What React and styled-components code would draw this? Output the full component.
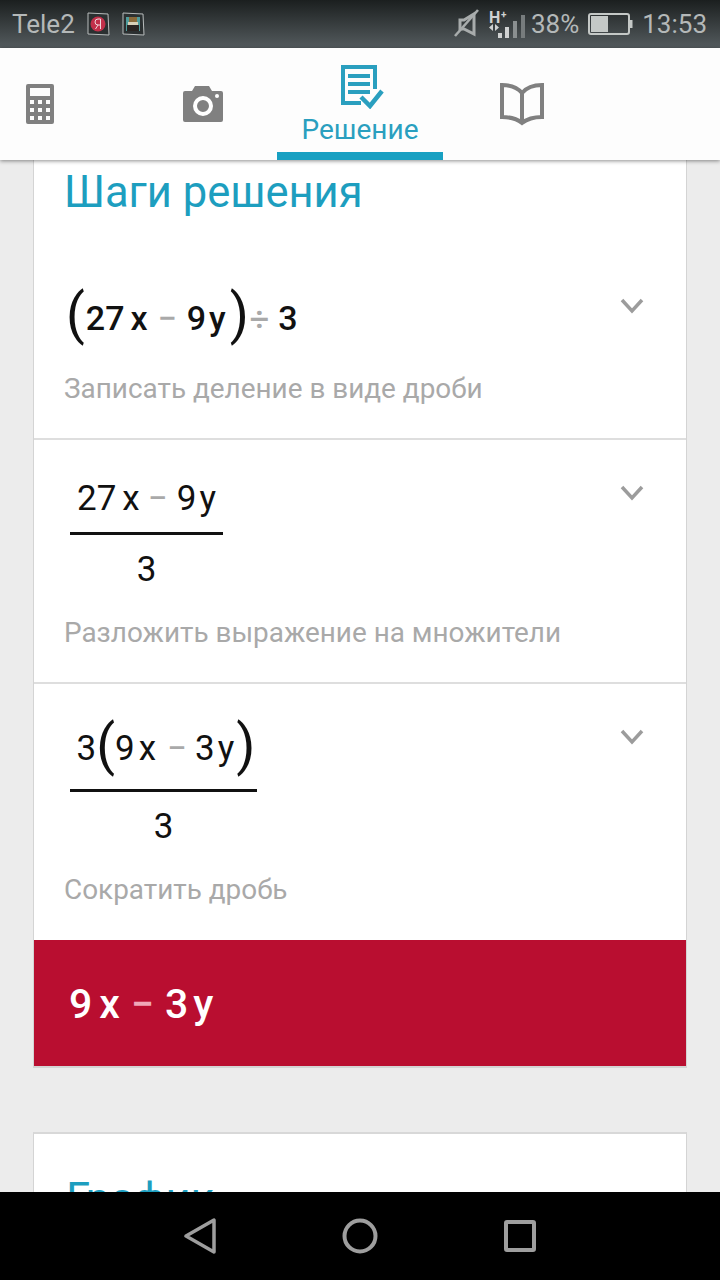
import React from "react"
import styled, { createGlobalStyle } from "styled-components"

const GlobalStyle = createGlobalStyle`
  html, body {
    margin: 0;
    padding: 0;
    background: #ececec;
    font-family: Roboto, "Liberation Sans", sans-serif;
  }
`

const Screen = styled.div`
  width: 720px;
  height: 1280px;
  display: flex;
  flex-direction: column;
  overflow: hidden;
  background: #ececec;
`

const StatusBar = styled.div`
  height: 48px;
  flex: none;
  display: flex;
  align-items: center;
  justify-content: space-between;
  padding: 0 13px 0 12px;
  background: linear-gradient(#1b1f1f, #545b5e);
  color: #b4b8b8;
  font-size: 26px;
`

const StatusGroup = styled.div`
  display: flex;
  align-items: center;
  gap: ${(props) => props.$gap || 0}px;
  margin-left: ${(props) => props.$left || 0}px;
`

const StatusText = styled.span`
  margin-left: ${(props) => props.$left || 0}px;
  line-height: 48px;
`

const TabBar = styled.div`
  height: 112px;
  flex: none;
  display: grid;
  grid-template-columns: 80px 197px 166px 158px;
  background: #fdfdfd;
  box-shadow: 0 1px 4px rgba(0, 0, 0, 0.45);
  position: relative;
  z-index: 1;
`

const Tab = styled.div`
  display: flex;
  flex-direction: column;
  align-items: center;
  justify-content: center;
  padding-left: ${(props) => props.$pad || 0}px;
`

const ActiveTab = styled.div`
  display: flex;
  flex-direction: column;
  align-items: center;
  padding-top: 17px;
  box-sizing: border-box;
  border-bottom: 8px solid #18a0c2;
`

const SolutionSvg = styled.svg`
  margin-left: 5px;
  flex: none;
`

const TabLabel = styled.div`
  font-size: 28px;
  line-height: 30px;
  color: #2a9fbf;
  margin-top: 6px;
`

const Content = styled.div`
  flex: 1;
  min-height: 0;
  overflow: hidden;
  padding: 0 33px;
`

const Card = styled.div`
  background: #fff;
  border: 1px solid #d4d4d4;
  border-top: ${(props) => (props.$cut ? "none" : "2px solid #d8d8d8")};
  border-bottom-width: 2px;
  margin-bottom: 64px;
`

const CardTitle = styled.h2`
  margin: 0;
  padding: ${(props) => (props.$cut ? "9px 30px 0" : "42px 32px 0")};
  height: ${(props) => (props.$cut ? "84px" : "auto")};
  font-size: 43.5px;
  line-height: 48px;
  font-weight: 400;
  color: #1d9ebf;
`

const Step = styled.div`
  display: flex;
  justify-content: space-between;
  align-items: flex-start;
  padding: 24px 42px ${(props) => props.$bottom || 31}px 30px;
  border-bottom: ${(props) => (props.$last ? "none" : "2px solid #dedede")};
`

const Chevron = styled.svg`
  width: 24px;
  height: 16px;
  margin-top: 21px;
  flex: none;
`

const Math = styled.div`
  display: flex;
  align-items: center;
  color: #111;
  font-size: ${(props) => props.$size || 35}px;
  font-weight: ${(props) => props.$weight || 400};
  height: ${(props) => props.$height || 68}px;
`

const Term = styled.span`
  margin-left: ${(props) => props.$left || 0}px;
  margin-right: ${(props) => props.$right || 0}px;
  color: ${(props) => props.$color || "inherit"};
`

const Paren = styled.span`
  font-size: 55px;
  font-weight: 400;
  line-height: 64px;
  margin-top: -7px;
  margin-left: ${(props) => props.$left || 0}px;
  margin-right: ${(props) => props.$right || 0}px;
`

const Fraction = styled.div`
  display: inline-flex;
  flex-direction: column;
  align-items: center;
  margin-left: 6px;
  width: ${(props) => props.$width}px;
`

const FractionLine = styled.div`
  width: 100%;
  height: 3px;
  background: #111;
`

const Note = styled.div`
  font-size: 27.9px;
  line-height: 36px;
  color: #a9a9a9;
  margin-top: ${(props) => props.$top || 13}px;
`

const Answer = styled.div`
  height: 126px;
  box-sizing: border-box;
  background: #b90e30;
  display: flex;
  align-items: center;
  padding: 2px 0 0 35px;
  color: #fff;
  font-size: 41px;
  font-weight: 500;
`

const NavBar = styled.div`
  height: 88px;
  flex: none;
  background: #000;
  display: grid;
  grid-template-columns: repeat(3, 160px);
  justify-content: center;
  align-items: center;
  justify-items: center;
`

const CalculatorIcon = () => (
  <svg width="28" height="40" viewBox="0 0 28 40">
    <path
      fill="#808080"
      fillRule="evenodd"
      d="M2 0h24a2 2 0 0 1 2 2v36a2 2 0 0 1-2 2H2a2 2 0 0 1-2-2V2a2 2 0 0 1 2-2zM4 4v8h20V4zM4 16v4h4v-4zM12 16v4h4v-4zM20 16v4h4v-4zM4 24v4h4v-4zM12 24v4h4v-4zM20 24v4h4v-4zM4 32v4h4v-4zM12 32v4h4v-4zM20 32v4h4v-4z"
    />
  </svg>
)

const CameraIcon = () => (
  <svg width="40" height="36" viewBox="0 0 40 36">
    <path
      fill="#808080"
      d="M2 5h7l3-5h14l3 5h9a2 2 0 0 1 2 2v27a2 2 0 0 1-2 2H2a2 2 0 0 1-2-2V7a2 2 0 0 1 2-2z"
    />
    <circle cx="20" cy="20" r="8" fill="none" stroke="#fff" strokeWidth="4" />
    <circle cx="34" cy="10" r="2" fill="#fff" />
  </svg>
)

const SolutionIcon = () => (
  <SolutionSvg width="43" height="44" viewBox="0 0 43 44">
    <path fill="none" stroke="#2a9fbf" strokeWidth="4" d="M20 38H2V2h32v22" />
    <path fill="none" stroke="#2a9fbf" strokeWidth="4" d="M7 11h22M7 19h22M7 27h22" />
    <path fill="none" stroke="#2a9fbf" strokeWidth="4.500" d="M20 32l9 9 12-15" />
  </SolutionSvg>
)

const BookIcon = () => (
  <svg width="44" height="44" viewBox="0 0 44 44">
    <path
      fill="none"
      stroke="#808080"
      strokeWidth="4"
      d="M22 11C17 5 9 3 2 3v32c8 0 15 2 20 6 5-4 12-6 20-6V3c-7 0-15 2-20 8zV40"
    />
  </svg>
)

const ChevronIcon = () => (
  <Chevron viewBox="0 0 24 16">
    <path fill="none" stroke="#9c9c9c" strokeWidth="3.500" d="M2 2l10 11L22 2" />
  </Chevron>
)

const YandexBadge = () => (
  <svg width="24" height="24" viewBox="0 0 24 24">
    <path fill="#2b3031" stroke="#b8bcbc" strokeWidth="1" d="M2 1l20 1 1 21-21-1z" />
    <circle cx="12" cy="12" r="7.500" fill="#c2304a" />
    <path fill="none" stroke="#f0d8dc" strokeWidth="1" d="M14.500 17V7h-2.500a2.800 2.800 0 0 0 0 6h2.500M12 13l-2.500 4" />
  </svg>
)

const GameBadge = () => (
  <svg width="24" height="24" viewBox="0 0 24 24">
    <path fill="#2b3031" stroke="#b8bcbc" strokeWidth="1" d="M2 1l20 1 1 21-21-1z" />
    <rect x="5" y="5" width="14" height="14" fill="#4f9c9c" />
    <rect x="8" y="5" width="8" height="5" fill="#8a6a3a" />
    <rect x="7" y="10" width="10" height="3" fill="#d8d0b8" />
    <rect x="6" y="13" width="12" height="6" fill="#2a2422" />
  </svg>
)

const MuteIcon = () => (
  <svg width="26" height="30" viewBox="0 0 26 30">
    <path fill="none" stroke="#a8acac" strokeWidth="3" d="M6 11h4l10-6v20l-10-5H6z" />
    <path stroke="#a8acac" strokeWidth="2.600" d="M24 1L1 27" />
  </svg>
)

const SignalIcon = () => (
  <svg width="37" height="30" viewBox="0 0 37 30">
    <text x="0" y="14" fontSize="16" fontWeight="700" fill="#d0d2d2" fontFamily="Roboto, sans-serif">H</text>
    <text x="12" y="9" fontSize="10" fontWeight="700" fill="#d0d2d2" fontFamily="Roboto, sans-serif">+</text>
    <path fill="#d0d2d2" d="M4 15v7l-4-3.500zM6 15v7l4-3.500z" />
    <rect x="9" y="24" width="4" height="5" fill="#d0d2d2" />
    <rect x="16" y="18" width="4" height="11" fill="#d0d2d2" />
    <rect x="24" y="12" width="4" height="17" fill="#8a8f90" />
    <rect x="32" y="6" width="4" height="23" fill="#777c7d" />
  </svg>
)

const BatteryIcon = () => (
  <svg width="45" height="22" viewBox="0 0 45 22">
    <rect x="1" y="1" width="40" height="20" rx="2" fill="none" stroke="#c4c8c6" strokeWidth="2" />
    <rect x="3" y="3" width="17" height="16" fill="#c4c8c6" />
    <rect x="42" y="7" width="2.500" height="8" fill="#c4c8c6" />
  </svg>
)

const BackIcon = () => (
  <svg width="32" height="36" viewBox="0 0 32 36">
    <path fill="none" stroke="#9e9e9e" strokeWidth="3.500" strokeLinejoin="round" d="M30 2v32L2 18z" />
  </svg>
)

const HomeIcon = () => (
  <svg width="36" height="36" viewBox="0 0 36 36">
    <circle cx="18" cy="18" r="15.500" fill="none" stroke="#9e9e9e" strokeWidth="4" />
  </svg>
)

const RecentIcon = () => (
  <svg width="32" height="32" viewBox="0 0 32 32">
    <rect x="2" y="2" width="28" height="28" rx="1" fill="none" stroke="#9e9e9e" strokeWidth="4" />
  </svg>
)

export default function App() {
  return (
    <Screen>
      <GlobalStyle />
      <StatusBar>
        <StatusGroup $gap={11}>
          <StatusText>Tele2</StatusText>
          <YandexBadge />
          <GameBadge />
        </StatusGroup>
        <StatusGroup>
          <MuteIcon />
          <StatusGroup $gap={3} $left={9}>
            <SignalIcon />
            <StatusText $left={2}>38%</StatusText>
          </StatusGroup>
          <StatusGroup $left={9}>
            <BatteryIcon />
          </StatusGroup>
          <StatusText $left={9}>13:53</StatusText>
        </StatusGroup>
      </StatusBar>

      <TabBar>
        <Tab>
          <CalculatorIcon />
        </Tab>
        <Tab $pad={49}>
          <CameraIcon />
        </Tab>
        <ActiveTab>
          <SolutionIcon />
          <TabLabel>Решение</TabLabel>
        </ActiveTab>
        <Tab>
          <BookIcon />
        </Tab>
      </TabBar>

      <Content>
        <Card $cut>
          <CardTitle $cut>Шаги решения</CardTitle>
          <Step>
            <div>
              <Math $height={81} $weight={500} $size={34}>
                <Paren $left={2} $right={1}>(</Paren>
                <Term>27</Term>
                <Term $left={6}>x</Term>
                <Term $left={10} $right={10} $color="#a9a9a9">−</Term>
                <Term>9</Term>
                <Term $left={3}>y</Term>
                <Paren $left={4}>)</Paren>
                <Term $left={1} $right={9} $color="#a9a9a9">÷</Term>
                <Term>3</Term>
              </Math>
              <Note>Записать деление в виде дроби</Note>
            </div>
            <ChevronIcon />
          </Step>
          <Step>
            <div>
              <Fraction $width={153}>
                <Math>
                  <Term>27</Term>
                  <Term $left={6}>x</Term>
                  <Term $left={8} $right={9} $color="#a9a9a9">−</Term>
                  <Term>9</Term>
                  <Term $left={3}>y</Term>
                </Math>
                <FractionLine />
                <Math>3</Math>
              </Fraction>
              <Note $top={12}>Разложить выражение на множители</Note>
            </div>
            <ChevronIcon />
          </Step>
          <Step $last $bottom={32}>
            <div>
              <Fraction $width={187}>
                <Math $height={81}>
                  <Term $left={5}>3</Term>
                  <Paren>(</Paren>
                  <Term>9</Term>
                  <Term $left={4}>x</Term>
                  <Term $left={11} $right={8} $color="#a9a9a9">−</Term>
                  <Term>3</Term>
                  <Term $left={3}>y</Term>
                  <Paren $left={2}>)</Paren>
                </Math>
                <FractionLine />
                <Math $height={68}>3</Math>
              </Fraction>
              <Note $top={12}>Сократить дробь</Note>
            </div>
            <ChevronIcon />
          </Step>
          <Answer>
            <Term>9</Term>
            <Term $left={7}>x</Term>
            <Term $left={11} $right={11} $color="#f0a8b8">−</Term>
            <Term>3</Term>
            <Term $left={5}>y</Term>
          </Answer>
        </Card>
        <Card>
          <CardTitle>График</CardTitle>
        </Card>
      </Content>

      <NavBar>
        <BackIcon />
        <HomeIcon />
        <RecentIcon />
      </NavBar>
    </Screen>
  )
}
